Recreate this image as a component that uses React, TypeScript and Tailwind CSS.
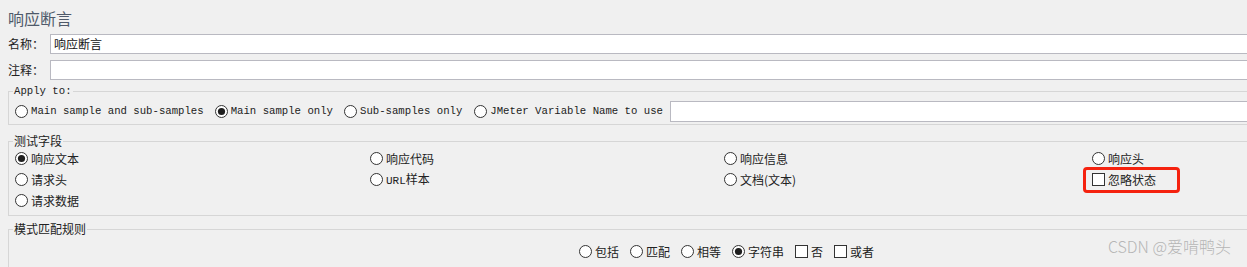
import React from "react";

const CJK = "font-['Noto_Sans_CJK_SC','Noto_Sans',sans-serif]";
const MONO = "font-['Liberation_Mono','DejaVu_Sans_Mono',monospace]";

function Radio({ checked }: { checked?: boolean }) {
  return (
    <svg width="13" height="13" viewBox="0 0 13 13" className="shrink-0">
      <circle cx="6.5" cy="6.5" r="6" fill="#ffffff" stroke="#333333" strokeWidth="1" />
      {checked && <circle cx="6.5" cy="6.5" r="3.6" fill="#1e1e1e" />}
    </svg>
  );
}

function Check() {
  return (
    <svg width="13" height="13" viewBox="0 0 13 13" className="shrink-0">
      <rect x="0.5" y="0.5" width="12" height="12" fill="#ffffff" stroke="#333333" strokeWidth="1" />
    </svg>
  );
}

function CnItem({ label, checked, box }: { label: React.ReactNode; checked?: boolean; box?: boolean }) {
  return (
    <div className={`flex items-center gap-[3px] h-[21px] text-[12px] leading-[21px] text-[#222] ${CJK}`}>
      {box ? <Check /> : <Radio checked={checked} />}
      <span className="whitespace-nowrap">{label}</span>
    </div>
  );
}

function MonoItem({ label, checked, className = "" }: { label: string; checked?: boolean; className?: string }) {
  return (
    <div className={`flex items-center gap-[3px] h-[21px] shrink-0 ${className}`}>
      <Radio checked={checked} />
      <span className={`whitespace-pre text-[10.67px] leading-[21px] text-[#222] ${MONO}`}>{label}</span>
    </div>
  );
}

export default function App() {
  return (
    <div className="w-[1247px] h-[267px] overflow-hidden bg-[#f0f0f0] relative">
      <div className="w-[1262px] flex flex-col">
        {/* Title */}
        <div className={`pt-[8px] pl-[8px] text-[16px] leading-[20px] text-[#4f5a6a] ${CJK}`}>响应断言</div>

        {/* Name */}
        <div className="mt-[6px] flex items-center pl-[8px]">
          <span className={`w-[42px] text-[12px] leading-[20px] text-[#222] ${CJK}`}>名称：</span>
          <div className={`flex-1 h-[20px] bg-white border border-[#b9b9c1] pl-[3px] text-[12px] leading-[18px] text-[#111] ${CJK}`}>
            响应断言
          </div>
        </div>

        {/* Comment */}
        <div className="mt-[6px] flex items-center pl-[8px]">
          <span className={`w-[42px] text-[12px] leading-[20px] text-[#222] ${CJK}`}>注释：</span>
          <div className="flex-1 h-[20px] bg-white border border-[#b9b9c1]" />
        </div>

        {/* Apply to */}
        <fieldset className="mt-[4px] ml-[8px] border border-[#d6d6d6] pb-[2px]">
          <legend className={`ml-[4px] px-[1px] text-[10.67px] leading-[14px] text-[#222] ${MONO}`}>Apply to:</legend>
          <div className="mt-[3px] pl-[6px] flex items-center h-[21px]">
            <MonoItem label="Main sample and sub-samples" />
            <MonoItem label="Main sample only" checked className="ml-[11px]" />
            <MonoItem label="Sub-samples only" className="ml-[11px]" />
            <MonoItem label="JMeter Variable Name to use" className="ml-[12px]" />
            <div className="ml-[7px] flex-1 h-[21px] bg-white border border-[#b9b9c1]" />
          </div>
        </fieldset>

        {/* Test field */}
        <fieldset className="mt-[9px] ml-[8px] border border-[#d6d6d6] pb-[4px]">
          <legend className={`ml-[4px] px-[1px] text-[12px] leading-[14px] text-[#222] ${CJK}`}>测试字段</legend>
          <div className="pl-[6px] grid grid-cols-[355px_354px_368px_1fr]">
            <CnItem label="响应文本" checked />
            <CnItem label="响应代码" />
            <CnItem label="响应信息" />
            <CnItem label="响应头" />
            <CnItem label="请求头" />
            <CnItem
              label={
                <>
                  <span className={`text-[11px] ${MONO}`}>URL</span>样本
                </>
              }
            />
            <CnItem label="文档(文本)" />
            <div className="relative">
              <CnItem label="忽略状态" box />
              <div className="absolute left-[-9px] top-[-2px] w-[97px] h-[26px] border-[3px] border-[#f5220f] rounded-[4px]" />
            </div>
            <CnItem label="请求数据" />
          </div>
        </fieldset>

        {/* Pattern rules */}
        <fieldset className="mt-[6px] ml-[8px] border border-[#d6d6d6] pb-[10px]">
          <legend className={`ml-[4px] px-[1px] text-[12px] leading-[14px] text-[#222] ${CJK}`}>模式匹配规则</legend>
          <div className="mt-[5px] pl-[570px] flex items-center gap-[11px]">
            <CnItem label="包括" />
            <CnItem label="匹配" />
            <CnItem label="相等" />
            <CnItem label="字符串" checked />
            <CnItem label="否" box />
            <CnItem label="或者" box />
          </div>
        </fieldset>
      </div>

      <div className={`absolute right-[16px] top-[236px] text-[16px] leading-[20px] font-light text-[#b5b5b5] ${CJK}`}>
        CSDN @爱啃鸭头
      </div>
    </div>
  );
}
